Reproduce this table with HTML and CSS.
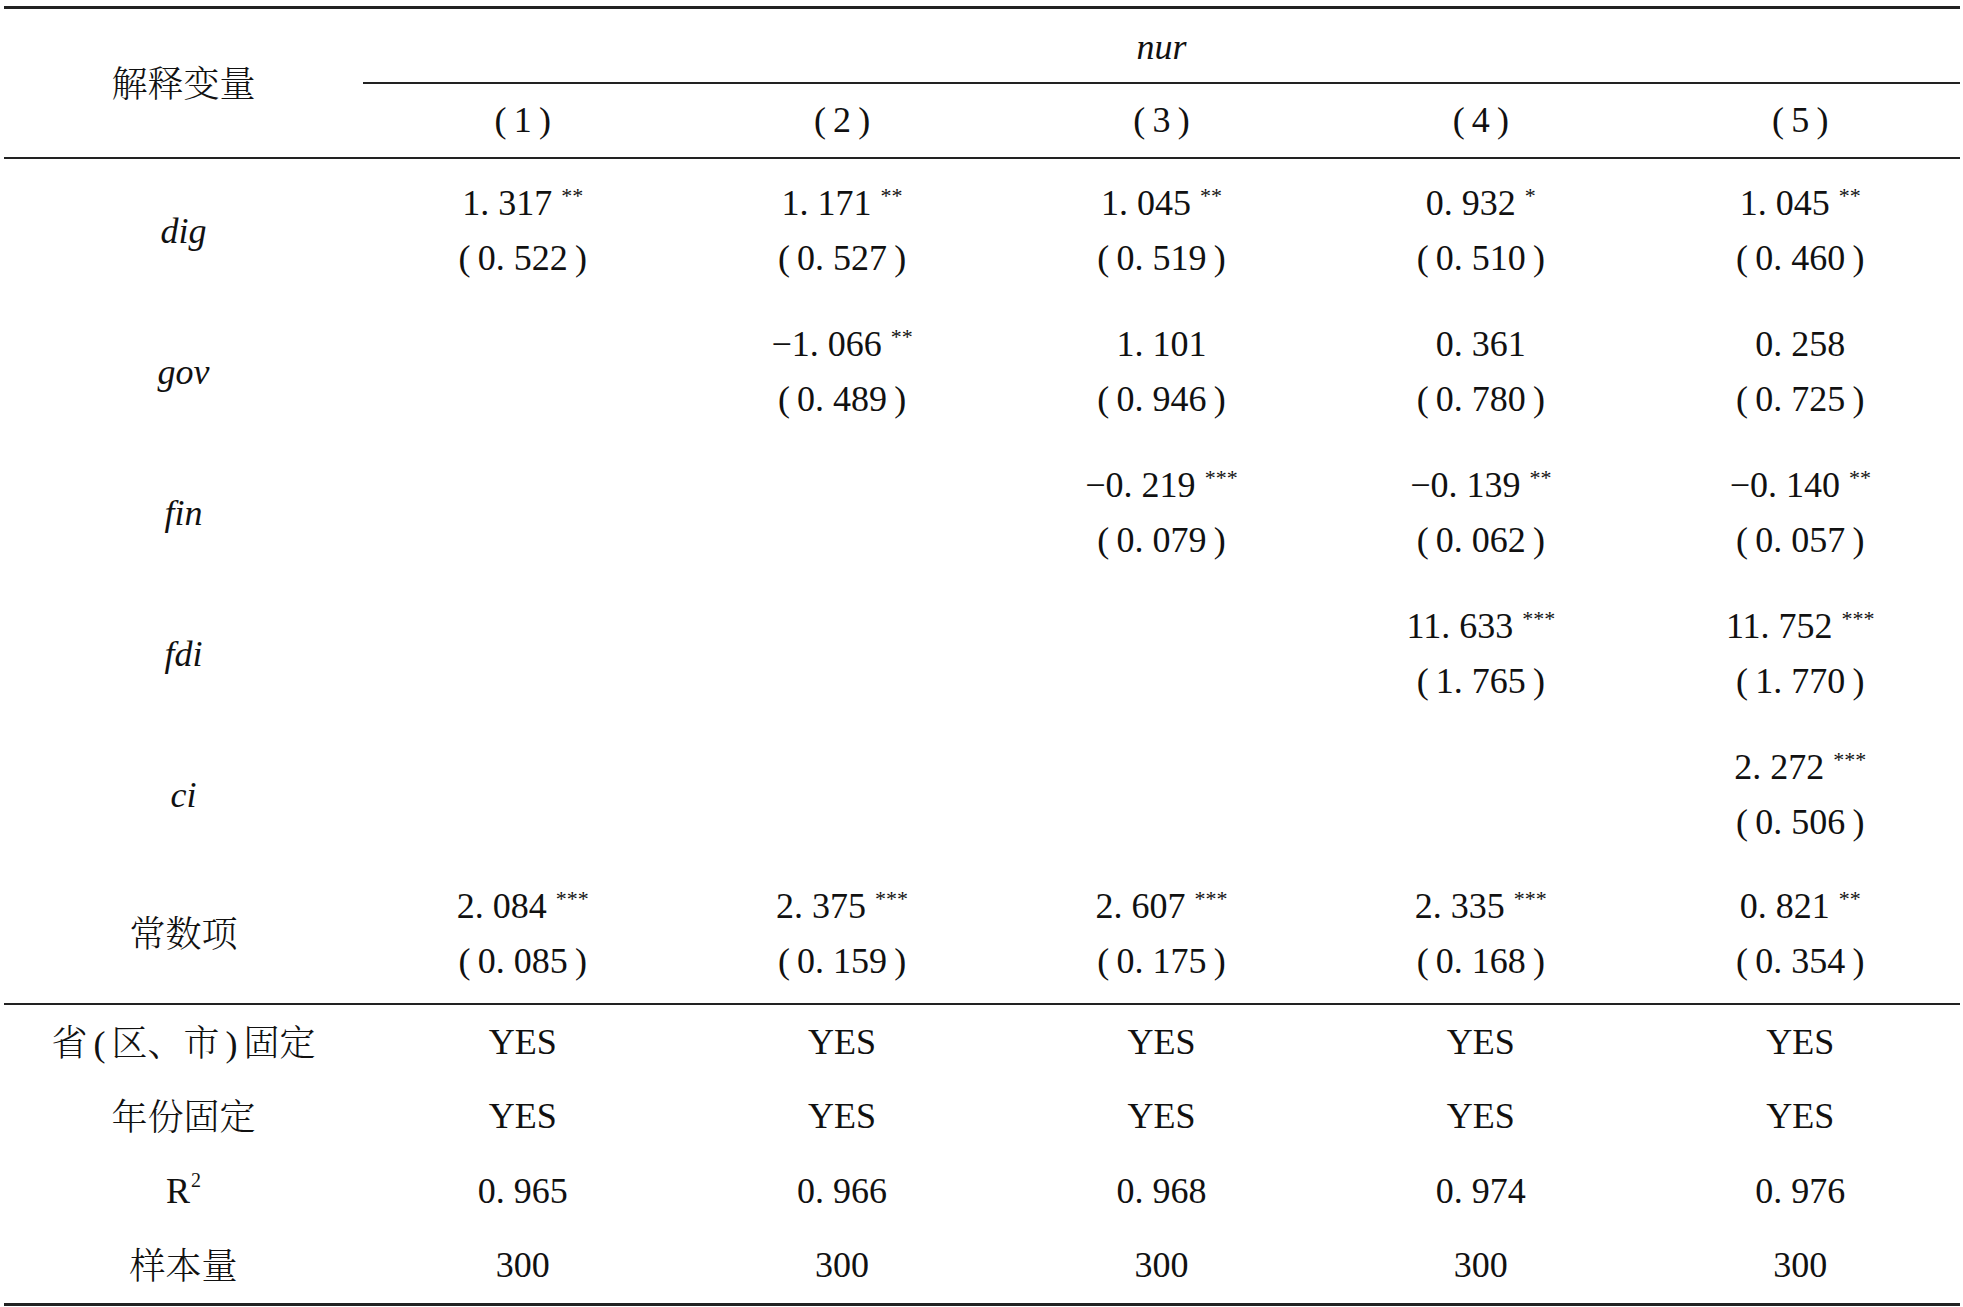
FILE: index.html
```html
<!DOCTYPE html>
<html lang="zh-CN">
<head>
<meta charset="utf-8">
<title>回归结果</title>
<link rel="stylesheet" href="styles.css">
</head>
<body>
<table class="reg">
  <colgroup>
    <col class="c-label">
    <col><col><col><col><col>
  </colgroup>
  <thead>
    <tr class="h1">
      <th class="label head-label" rowspan="2"><span class="zh">解释变量</span></th>
      <th class="dep" colspan="5"><i>nur</i></th>
    </tr>
    <tr class="h2">
      <th class="colno">(&#8201;1&#8201;)</th>
      <th class="colno">(&#8201;2&#8201;)</th>
      <th class="colno">(&#8201;3&#8201;)</th>
      <th class="colno">(&#8201;4&#8201;)</th>
      <th class="colno">(&#8201;5&#8201;)</th>
    </tr>
  </thead>
  <tbody class="coef">
    <tr>
      <td class="label"><i>dig</i></td>
      <td><div class="ln">1. 317<sup>**</sup></div><div class="ln">(&#8201;0. 522&#8201;)</div></td>
      <td><div class="ln">1. 171<sup>**</sup></div><div class="ln">(&#8201;0. 527&#8201;)</div></td>
      <td><div class="ln">1. 045<sup>**</sup></div><div class="ln">(&#8201;0. 519&#8201;)</div></td>
      <td><div class="ln">0. 932<sup>*</sup></div><div class="ln">(&#8201;0. 510&#8201;)</div></td>
      <td><div class="ln">1. 045<sup>**</sup></div><div class="ln">(&#8201;0. 460&#8201;)</div></td>
    </tr>
    <tr>
      <td class="label"><i>gov</i></td>
      <td></td>
      <td><div class="ln">&minus;1. 066<sup>**</sup></div><div class="ln">(&#8201;0. 489&#8201;)</div></td>
      <td><div class="ln">1. 101</div><div class="ln">(&#8201;0. 946&#8201;)</div></td>
      <td><div class="ln">0. 361</div><div class="ln">(&#8201;0. 780&#8201;)</div></td>
      <td><div class="ln">0. 258</div><div class="ln">(&#8201;0. 725&#8201;)</div></td>
    </tr>
    <tr>
      <td class="label"><i>fin</i></td>
      <td></td>
      <td></td>
      <td><div class="ln">&minus;0. 219<sup>***</sup></div><div class="ln">(&#8201;0. 079&#8201;)</div></td>
      <td><div class="ln">&minus;0. 139<sup>**</sup></div><div class="ln">(&#8201;0. 062&#8201;)</div></td>
      <td><div class="ln">&minus;0. 140<sup>**</sup></div><div class="ln">(&#8201;0. 057&#8201;)</div></td>
    </tr>
    <tr>
      <td class="label"><i>fdi</i></td>
      <td></td>
      <td></td>
      <td></td>
      <td><div class="ln">11. 633<sup>***</sup></div><div class="ln">(&#8201;1. 765&#8201;)</div></td>
      <td><div class="ln">11. 752<sup>***</sup></div><div class="ln">(&#8201;1. 770&#8201;)</div></td>
    </tr>
    <tr>
      <td class="label"><i>ci</i></td>
      <td></td>
      <td></td>
      <td></td>
      <td></td>
      <td><div class="ln">2. 272<sup>***</sup></div><div class="ln">(&#8201;0. 506&#8201;)</div></td>
    </tr>
    <tr class="last">
      <td class="label"><span class="zh">常数项</span></td>
      <td><div class="ln">2. 084<sup>***</sup></div><div class="ln">(&#8201;0. 085&#8201;)</div></td>
      <td><div class="ln">2. 375<sup>***</sup></div><div class="ln">(&#8201;0. 159&#8201;)</div></td>
      <td><div class="ln">2. 607<sup>***</sup></div><div class="ln">(&#8201;0. 175&#8201;)</div></td>
      <td><div class="ln">2. 335<sup>***</sup></div><div class="ln">(&#8201;0. 168&#8201;)</div></td>
      <td><div class="ln">0. 821<sup>**</sup></div><div class="ln">(&#8201;0. 354&#8201;)</div></td>
    </tr>
  </tbody>
  <tbody class="stats">
    <tr>
      <td class="label"><span class="zh">省<span class="cp">(</span>区、市<span class="cp">)</span>固定</span></td>
      <td>YES</td><td>YES</td><td>YES</td><td>YES</td><td>YES</td>
    </tr>
    <tr>
      <td class="label"><span class="zh">年份固定</span></td>
      <td>YES</td><td>YES</td><td>YES</td><td>YES</td><td>YES</td>
    </tr>
    <tr>
      <td class="label">R<sup class="sq">2</sup></td>
      <td>0. 965</td><td>0. 966</td><td>0. 968</td><td>0. 974</td><td>0. 976</td>
    </tr>
    <tr>
      <td class="label"><span class="zh">样本量</span></td>
      <td>300</td><td>300</td><td>300</td><td>300</td><td>300</td>
    </tr>
  </tbody>
</table>
</body>
</html>
```

FILE: styles.css
```css
html, body {
  margin: 0;
  padding: 0;
  background: #ffffff;
}

body {
  padding: 6px 0 0 4px;
  font-family: "Liberation Serif", "Noto Serif CJK SC", "Noto Sans CJK SC", serif;
  font-size: 36px;
  color: #111;
}

.reg {
  width: 1956px;
  table-layout: fixed;
  border-collapse: separate;
  border-spacing: 0;
  border-top: 3px solid #222;
  border-bottom: 3px solid #222;
}

.c-label {
  width: 359px;
}

.reg th,
.reg td {
  padding: 0;
  box-sizing: border-box;
  text-align: center;
  vertical-align: middle;
  font-weight: normal;
  line-height: 55px;
  white-space: nowrap;
}

.reg i {
  font-family: "Liberation Serif", "DejaVu Serif", serif;
  font-style: italic;
}

.zh {
  font-family: "Noto Serif CJK SC", "Noto Sans CJK SC", serif;
  font-weight: 300;
}

.h1 th.dep {
  height: 75px;
  border-bottom: 2px solid #222;
}

.h1 th.dep i {
  position: relative;
  top: 2px;
}

.h2 th {
  height: 75px;
  border-bottom: 2px solid #222;
}

.head-label {
  border-bottom: 2px solid #222;
}

.coef td {
  height: 141px;
  padding-top: 3px;
}

.coef tr.last td {
  border-bottom: 2px solid #222;
  padding-top: 0;
}

.ln {
  line-height: 55px;
}

.reg sup {
  font-size: 22px;
  line-height: 0;
  vertical-align: 12px;
  margin-left: 9px;
}

.reg sup.sq {
  font-size: 20px;
  vertical-align: 16px;
  margin-left: 1px;
}

.stats td {
  height: 74.5px;
}

.cp {
  font-family: "Liberation Serif", serif;
  font-weight: normal;
  margin: 0 6px;
}
```
